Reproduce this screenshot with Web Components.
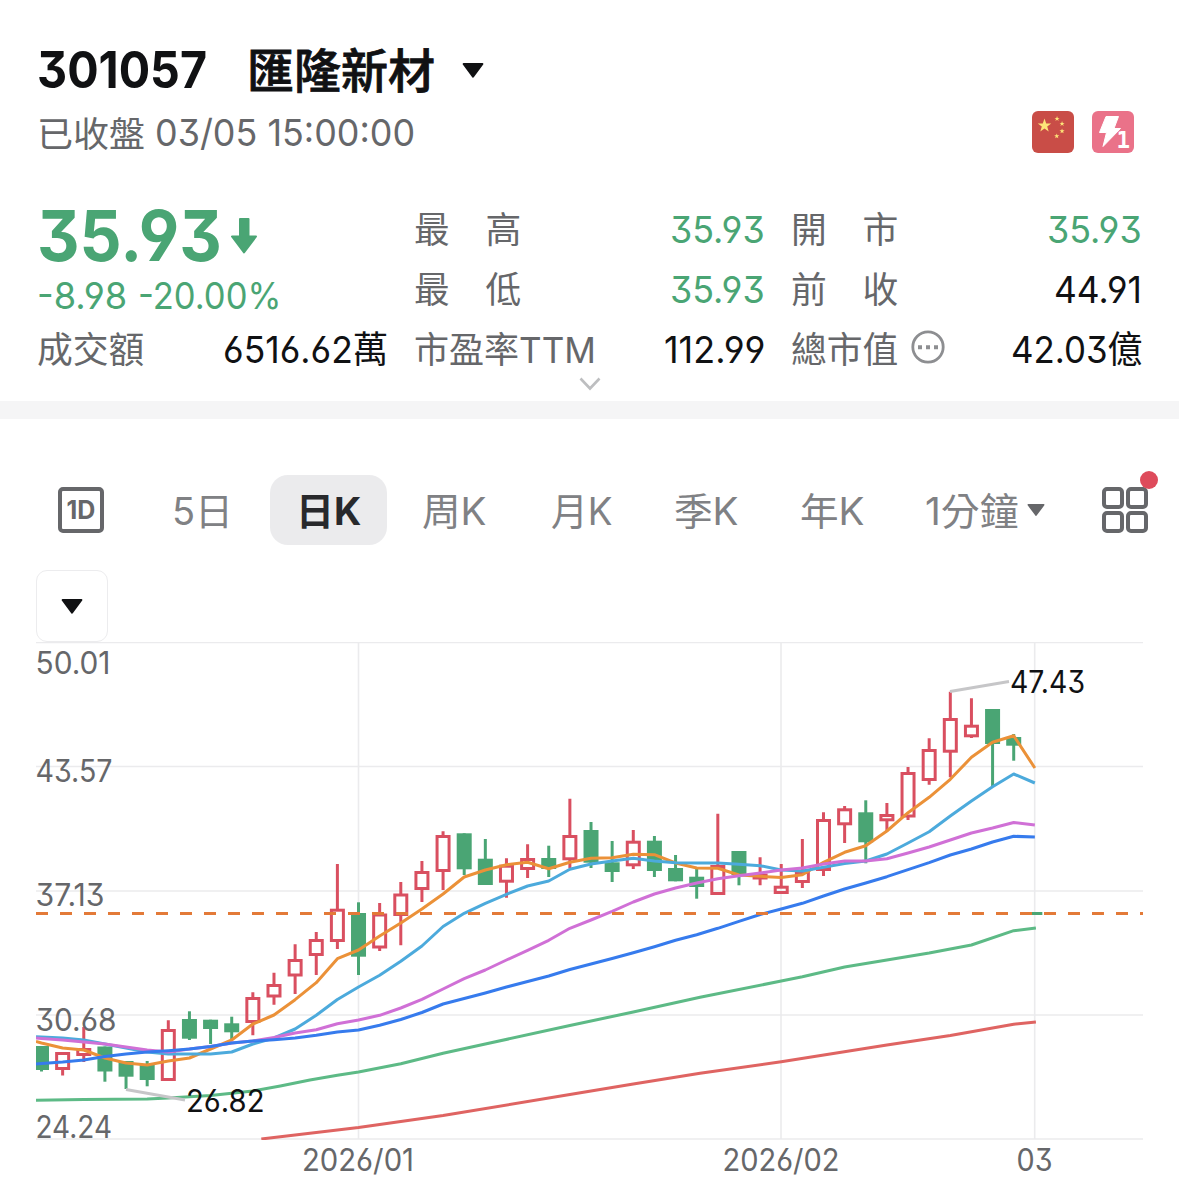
<!DOCTYPE html>
<html lang="zh-Hant">
<head>
<meta charset="utf-8">
<title>301057 匯隆新材</title>
<style>
    html, body {
        margin: 0;
        background: #fff;
    }

    body {
        width: 1179px;
        height: 1204px;
        overflow: hidden;
        font-family: Inter, "Noto Sans CJK TC", sans-serif;
        font-feature-settings: "cv03", "cv04", "cv09";
        color: #101113;
        --up: #d94f60;
        --down: #4aa574;
        --muted: #66676a;
    }
</style>
</head>
<body>
<stock-page></stock-page>

<script>
/**
 * Text squeezed or stretched horizontally to a given width
 */
class FitText extends HTMLElement {
    constructor() {
        super();
        this.attachShadow({ mode: 'open' });
        this.shadowRoot.innerHTML = `
            <style>
                :host {
                    display: block;
                    flex: none;
                    white-space: nowrap;
                }

                span {
                    display: inline-block;
                    transform-origin: 0 50%;
                }
            </style>
            <span><slot></slot></span>
        `;
    }

    connectedCallback() {
        const width = Number(this.getAttribute('width'));
        const span = this.shadowRoot.querySelector('span');
        this.style.width = width + 'px';
        span.style.transform = `scaleX(${width / span.offsetWidth})`;
    }
}

class CaretDown extends HTMLElement {
    constructor() {
        super();
        this.attachShadow({ mode: 'open' });
        this.shadowRoot.innerHTML = `
            <style>
                :host { display: block; flex: none; width: 22px; }
                svg { display: block; width: 100%; }
            </style>
            <svg viewBox="0 0 22 15"><path d="M1.6 1H20.4L11 13.6Z" fill="currentColor" stroke="currentColor" stroke-width="2" stroke-linejoin="round"/></svg>
        `;
    }
}

class StockHeader extends HTMLElement {
    constructor() {
        super();
        this.attachShadow({ mode: 'open' });
        this.shadowRoot.innerHTML = `
            <style>
                :host {
                    display: block;
                    padding: 40px 45px 0 37px;
                }

                .title, .status, .time, .badges {
                    display: flex;
                    align-items: center;
                }

                .title {
                    height: 60px;
                    line-height: 60px;
                    font-size: 51px;
                    font-weight: 650;
                }

                .name {
                    font-size: 47px;
                    font-weight: 500;
                    -webkit-text-stroke: .8px currentColor;
                    margin: 2px 27px 0 40px;
                }

                .status {
                    height: 66px;
                    line-height: 66px;
                    justify-content: space-between;
                    font-size: 37px;
                    color: var(--muted);
                }

                .time { gap: 10px; }
                .cjk { font-size: 35.7px; padding-top: 1px; }
                .badges { gap: 18px; margin-top: -2px; }
                svg { display: block; }
            </style>
            <div class="title">
                <fit-text width="170">301057</fit-text>
                <fit-text class="name" width="188">匯隆新材</fit-text>
                <caret-down></caret-down>
            </div>
            <div class="status">
                <div class="time">
                    <fit-text class="cjk" width="108">已收盤</fit-text>
                    <fit-text width="260">03/05 15:00:00</fit-text>
                </div>
                <div class="badges">
                    <svg width="42" height="42" viewBox="0 0 42 42">
                        <rect width="42" height="42" rx="6" fill="#c94d47"/>
                        <g fill="#fde478">
                            <path id="star" d="M12.5 7.6l1.7 4.8h5l-4 3.1 1.5 4.9-4.2-2.9-4.2 2.9 1.5-4.9-4-3.1h5z"/>
                            <use href="#star" transform="translate(20.3 2.2) scale(.38)"/>
                            <use href="#star" transform="translate(25.3 7.2) scale(.38)"/>
                            <use href="#star" transform="translate(25.3 14.5) scale(.38)"/>
                            <use href="#star" transform="translate(20 19.5) scale(.38)"/>
                        </g>
                    </svg>
                    <svg width="42" height="42" viewBox="0 0 42 42">
                        <rect width="42" height="42" rx="6" fill="#ea7289"/>
                        <path d="M14 5.5H26.5L22 17.5H28.5L11 35.5L14.5 21.5H7.5Z" fill="#fff" stroke="#fff" stroke-width="1" stroke-linejoin="round"/>
                        <text x="24.5" y="37" font-family="DejaVu Sans Mono, monospace" font-weight="700" font-size="22.5" fill="#fff">1</text>
                    </svg>
                </div>
            </div>
        `;
    }
}

/**
 * One label / value pair. Attributes: label, label-width, value, width, tone
 */
class QuoteItem extends HTMLElement {
    constructor() {
        super();
        this.attachShadow({ mode: 'open' });
    }

    connectedCallback() {
        this.shadowRoot.innerHTML = `
            <style>
                :host {
                    display: flex;
                    justify-content: space-between;
                    height: 60px;
                    line-height: 60px;
                    font-size: 37px;
                }

                .label {
                    display: flex;
                    align-items: center;
                    gap: 13px;
                    font-size: 35.8px;
                    color: var(--muted);
                }

                .value { color: ${this.getAttribute('tone') === 'down' ? 'var(--down)' : 'inherit'}; }
            </style>
            <div class="label"><fit-text width="${this.getAttribute('label-width')}">${this.getAttribute('label')}</fit-text><slot></slot></div>
            <fit-text class="value" width="${this.getAttribute('width')}">${this.getAttribute('value')}</fit-text>
        `;
    }
}

class QuotePanel extends HTMLElement {
    constructor() {
        super();
        this.attachShadow({ mode: 'open' });
        this.shadowRoot.innerHTML = `
            <style>
                :host {
                    display: block;
                    height: 201px;
                    margin-top: 34px;
                    border-bottom: 18px solid #f5f5f6;
                }

                .grid {
                    display: grid;
                    grid-template-columns: 351px 351px 351px;
                    column-gap: 26px;
                    height: 177px;
                    padding-left: 37px;
                }

                .last { color: var(--down); }

                .price {
                    display: flex;
                    align-items: center;
                    gap: 9px;
                    height: 72px;
                    line-height: 72px;
                    font-size: 70.5px;
                    font-weight: 700;
                }

                .change {
                    display: flex;
                    gap: 11px;
                    height: 48px;
                    line-height: 47px;
                    font-size: 37px;
                }

                svg { display: block; }
                .chevron { margin: 0 auto; }
                .more { margin-top: -6px; }
            </style>
            <div class="grid">
                <div>
                    <div class="last">
                        <div class="price">
                            <fit-text width="185">35.93</fit-text>
                            <svg width="26" height="36" viewBox="0 0 26 36"><path d="M9 1H17.5V18.5H25L13 34.5L1 18.5H9Z" fill="currentColor" stroke="currentColor" stroke-width="2" stroke-linejoin="round"/></svg>
                        </div>
                        <div class="change">
                            <fit-text width="90">-8.98</fit-text>
                            <fit-text width="143">-20.00%</fit-text>
                        </div>
                    </div>
                    <quote-item label="成交額" label-width="107" value="6516.62萬" width="165"></quote-item>
                </div>
                <div>
                    <quote-item label="最　高" label-width="107" value="35.93" width="95" tone="down"></quote-item>
                    <quote-item label="最　低" label-width="107" value="35.93" width="95" tone="down"></quote-item>
                    <quote-item label="市盈率TTM" label-width="182" value="112.99" width="101"></quote-item>
                </div>
                <div>
                    <quote-item label="開　市" label-width="107" value="35.93" width="95" tone="down"></quote-item>
                    <quote-item label="前　收" label-width="107" value="44.91" width="88"></quote-item>
                    <quote-item label="總市值" label-width="107" value="42.03億" width="131">
                        <svg class="more" width="34" height="34" viewBox="0 0 34 34">
                            <circle cx="17" cy="17" r="15.2" fill="none" stroke="#8d8e91" stroke-width="2.8"/>
                            <path d="M7 15.2h4v4h-4zM15 15.2h4v4h-4zM23 15.2h4v4h-4z" fill="#8d8e91"/>
                        </svg>
                    </quote-item>
                </div>
            </div>
            <svg class="chevron" width="22" height="14" viewBox="0 0 22 14"><path d="M1.5 1.5L11 11.5L20.5 1.5" fill="none" stroke="#bdbec0" stroke-width="2.6"/></svg>
        `;
    }
}

class PeriodTabs extends HTMLElement {
    constructor() {
        super();
        this.attachShadow({ mode: 'open' });
        this.shadowRoot.innerHTML = `
            <style>
                :host {
                    display: flex;
                    align-items: center;
                    height: 70px;
                    margin-top: 56px;
                    padding-left: 58px;
                    line-height: 72px;
                    font-size: 38px;
                    color: #808184;
                }

                .day {
                    box-sizing: border-box;
                    display: flex;
                    justify-content: center;
                    width: 46px;
                    height: 46px;
                    border: 4px solid #66676a;
                    border-radius: 5px;
                    line-height: 38px;
                    font-size: 25px;
                    font-weight: 650;
                    color: #66676a;
                }

                .tab { margin-top: 1px; }

                .active {
                    display: flex;
                    justify-content: center;
                    width: 117px;
                    height: 70px;
                    margin: 0 35px 0 37px;
                    border-radius: 18px;
                    background: #ebebed;
                    color: #28292c;
                    font-weight: 650;
                }

                caret-down {
                    width: 18px;
                    margin: 0 57px 0 9px;
                    color: #66676a;
                }

                .layout { position: relative; }
                .layout svg { display: block; }

                .dot {
                    position: absolute;
                    top: -16px;
                    right: -10px;
                    width: 18px;
                    height: 18px;
                    border-radius: 50%;
                    background: #de4b5b;
                }
            </style>
            <div class="day"><fit-text width="29">1D</fit-text></div>
            <fit-text class="tab" width="61" style="margin-left: 68px">5日</fit-text>
            <div class="active"><fit-text width="65">日K</fit-text></div>
            <fit-text class="tab" width="65">周K</fit-text>
            <fit-text class="tab" width="62" style="margin-left: 64px">月K</fit-text>
            <fit-text class="tab" width="65" style="margin-left: 61px">季K</fit-text>
            <fit-text class="tab" width="65" style="margin-left: 61px">年K</fit-text>
            <fit-text class="tab" width="93" style="margin-left: 60px">1分鐘</fit-text>
            <caret-down></caret-down>
            <div class="layout">
                <svg width="46" height="46" viewBox="0 0 46 46" fill="none" stroke="#66676a" stroke-width="4">
                    <rect x="2" y="2" width="18" height="18" rx="3"/>
                    <rect x="26" y="2" width="18" height="18" rx="3"/>
                    <rect x="2" y="26" width="18" height="18" rx="3"/>
                    <rect x="26" y="26" width="18" height="18" rx="3"/>
                </svg>
                <div class="dot"></div>
            </div>
        `;
    }
}

class IndicatorButton extends HTMLElement {
    constructor() {
        super();
        this.attachShadow({ mode: 'open' });
        this.shadowRoot.innerHTML = `
            <style>
                :host {
                    box-sizing: border-box;
                    display: flex;
                    align-items: center;
                    justify-content: center;
                    width: 72px;
                    height: 72px;
                    margin: 25px 0 0 36px;
                    border: 1.5px solid #ececee;
                    border-radius: 11px;
                }
            </style>
            <caret-down></caret-down>
        `;
    }
}

// [direction, high, body top, body bottom, low] in chart units
const CANDLES = [
    ['d', 1046, 1046, 1070, 1071.5], ['u', 1052, 1052, 1070, 1075.5], ['u', 1027, 1048, 1056, 1062],
    ['d', 1046.5, 1046.5, 1071.5, 1081.7], ['d', 1061, 1061, 1076.7, 1089], ['d', 1061, 1065, 1080, 1086.3],
    ['u', 1020.3, 1029, 1081, 1081], ['d', 1011.3, 1019, 1038.7, 1040], ['d', 1019.7, 1019.7, 1029, 1044],
    ['d', 1016.7, 1023.3, 1032.3, 1040], ['u', 992.3, 997, 1023, 1035.3], ['u', 972.7, 984, 997.5, 1004.7],
    ['u', 944.3, 959, 976.5, 994], ['u', 932, 939, 956, 975], ['u', 864, 908.7, 942, 949],
    ['d', 902.3, 913, 956.7, 975], ['u', 903, 913.5, 948.5, 951], ['u', 882, 893.5, 916, 945.3],
    ['u', 861, 871, 890, 902], ['u', 831.3, 835, 872, 890], ['d', 833.3, 833.3, 869.3, 875],
    ['d', 839, 858.7, 885, 885], ['u', 858.3, 864.7, 882.7, 897.7], ['u', 844.3, 858, 870, 878],
    ['d', 845.7, 858, 869, 877], ['u', 798.7, 835, 860.3, 868.3], ['d', 822, 830, 862.7, 868],
    ['d', 841, 862.3, 872, 882], ['u', 830, 840.7, 866.3, 869], ['d', 836, 840.7, 871, 877],
    ['d', 855, 868, 881.3, 881.3], ['d', 868.7, 876.7, 887, 898.7], ['u', 813.7, 865, 895, 895],
    ['d', 851, 851, 875, 885.3], ['u', 857.3, 873.5, 879.5, 885.3], ['u', 864, 885.7, 894, 894],
    ['u', 839, 871, 883, 888], ['u', 812.3, 819, 871, 876], ['u', 806, 808.3, 825.3, 843],
    ['d', 800.3, 812.3, 842.3, 863.3], ['u', 803, 814, 821.3, 831], ['u', 767, 772, 817.5, 820],
    ['u', 738.3, 749, 781, 784.7], ['u', 691.7, 718, 752.7, 777.3], ['u', 698.3, 724.7, 737.3, 738],
    ['d', 709, 709, 744, 786], ['d', 734, 737, 745.7, 760.7], ['d', 912, 912, 915, 915]
];

// moving averages, one value per candle unless x is given by "at"
const AVERAGES = [
    { color: '#df6462', at: [10.4, 15, 19, 25, 28, 31.16, 35, 40, 43, 46, 47.05],
        y: [1139, 1127.5, 1115.5, 1094.5, 1084, 1073.3, 1061.7, 1045, 1035.5, 1024.3, 1022] },
    { color: '#5dba86', at: [-.3, 2, 5, 6, 8, 10, 11.3, 12.7, 14, 15, 17, 19, 21, 25, 28, 31.16, 35, 36, 38, 40, 42, 44, 46, 47.05],
        y: [1100.3, 1099.5, 1099, 1098, 1095.5, 1091, 1086, 1080, 1075.3, 1072, 1063.7, 1053.3, 1044, 1025.5, 1012, 997.3, 981, 976.7, 967, 960, 953, 945, 930.7, 928] },
    { color: '#eb9138', y: [1043, 1048, 1050, 1058, 1063, 1065, 1061, 1058, 1049, 1040, 1024, 1015, 999.7, 982.7, 958.7, 950, 936, 923, 909, 894, 877, 870, 864.7, 862.3, 868.7, 862.3, 858.3, 857.7, 854.3, 854.7, 863, 868, 868.3, 875, 876.3, 877.5, 874.7, 862.3, 852.3, 845.7, 831, 812.7, 797.3, 779.3, 757.3, 742.3, 735.7, 768] },
    { color: '#4caadc', y: [1037, 1038, 1040, 1044, 1048, 1052, 1054, 1054, 1054, 1052, 1044, 1038, 1029, 1015.3, 999.5, 987, 975.3, 961.3, 946, 926.5, 913.3, 903.3, 894.3, 886, 881, 869.3, 864, 861, 858.3, 861, 862.7, 863, 863, 864.3, 865.7, 870, 871, 867.3, 863.5, 861, 854, 843, 831.7, 816, 801, 786.7, 774, 783] },
    { color: '#d070d6', y: [1038.5, 1040, 1042, 1044, 1047, 1050, 1052, 1049, 1046.5, 1043, 1041, 1037.5, 1033, 1029.7, 1023.7, 1020, 1015.3, 1008, 999.3, 989, 978.7, 970, 960, 950.3, 940.3, 928.3, 920, 911.3, 902, 894, 888, 883, 878.7, 875.7, 873, 870, 868, 864, 861, 861, 858.7, 853, 847, 840, 833, 828, 822.5, 825] },
    { color: '#367bed', y: [1063.5, 1062, 1060, 1056.5, 1054, 1052, 1050.7, 1049, 1046.5, 1043, 1041, 1039.7, 1038, 1035.3, 1032, 1030, 1025.3, 1019.5, 1012.5, 1004, 998.5, 993, 987, 981.5, 976, 969.5, 964, 958.5, 952.7, 946.7, 940.3, 934.7, 928.3, 921.3, 914.5, 909, 903.3, 896, 889, 883, 876.7, 869.7, 862.7, 855, 849, 842, 836.3, 837] }
];

// [text, x, baseline, drawn width, class]
const LABELS = [
    ['50.01', 35.5, 673.5, 75], ['43.57', 35.5, 781.5, 77], ['37.13', 35.5, 906, 69],
    ['30.68', 35.5, 1030.5, 81], ['24.24', 35.5, 1138, 76.5],
    ['2026/01', 302, 1171, 112], ['2026/02', 722.5, 1171, 117], ['03', 1016.5, 1171, 36],
    ['47.43', 1010, 693, 75, 'mark'], ['26.82', 186, 1112, 78.5, 'mark']
];

class CandleChart extends HTMLElement {
    constructor() {
        super();
        this.attachShadow({ mode: 'open' });
        this.render();
    }

    x(index) {
        return 41.5 + index * 21.135;
    }

    drawGrid() {
        const rows = [642.5, 766.5, 891, 1015, 1139].map(y => `M36 ${y}H1143`);
        const cols = [358.5, 781, 1034.7].map(x => `M${x} 642V1139`);
        return `<path d="${rows.join('')}${cols.join('')}" stroke="#ebebed" stroke-width="1.6"/>`;
    }

    drawCandle([dir, high, top, bottom, low], index) {
        const x = this.x(index);
        if (dir === 'd') {
            return `<path d="M${x} ${high}V${low}" stroke="var(--down)" stroke-width="3"/>
                <rect x="${x - 7.5}" y="${top}" width="15" height="${bottom - top}" fill="var(--down)"/>`;
        }
        return `<path d="M${x} ${high}V${top + 1}M${x} ${bottom - 1}V${Math.max(low, bottom - 1)}" stroke="var(--up)" stroke-width="3"/>
            <rect x="${x - 6}" y="${top + 1.5}" width="12" height="${bottom - top - 3}" fill="none" stroke="var(--up)" stroke-width="3"/>`;
    }

    drawAverage({ color, at, y }) {
        const points = y.map((value, i) => `${this.x(at ? at[i] : i)},${value}`);
        if (!at) {
            // run the line out to the left edge of the plot
            points.unshift(`36,${y[0] - (y[1] - y[0]) * 0.3}`);
        }
        return `<polyline points="${points.join(' ')}" fill="none" stroke="${color}" stroke-width="3" stroke-linejoin="round"/>`;
    }

    drawLabel([text, x, y, width, cls]) {
        return `<text class="${cls || ''}" x="${x}" y="${y}" textLength="${width}" lengthAdjust="spacingAndGlyphs">${text}</text>`;
    }

    render() {
        this.shadowRoot.innerHTML = `
            <style>
                :host { display: block; }
                svg { display: block; }
                text { font-size: 30.5px; fill: var(--muted); }
                .mark { fill: #101113; }
            </style>
            <svg width="1179" height="562" viewBox="0 642 1179 562">
                <clipPath id="plot"><rect x="36" y="642" width="1107" height="498"/></clipPath>
                ${this.drawGrid()}
                <g clip-path="url(#plot)">
                    ${CANDLES.map((c, i) => this.drawCandle(c, i)).join('')}
                    ${AVERAGES.map(a => this.drawAverage(a)).join('')}
                    <path d="M36 913.5H1143" stroke="#e37a38" stroke-width="3" stroke-dasharray="12"/>
                </g>
                <path d="M950 691.5L1009 681.5M126 1089.5L185 1100" stroke="#c6c6c8" stroke-width="2.8"/>
                ${LABELS.map(l => this.drawLabel(l)).join('')}
            </svg>
        `;
    }
}

class StockPage extends HTMLElement {
    constructor() {
        super();
        this.attachShadow({ mode: 'open' });
        this.shadowRoot.innerHTML = `
            <style>
                :host { display: block; }
            </style>
            <stock-header></stock-header>
            <quote-panel></quote-panel>
            <period-tabs></period-tabs>
            <indicator-button></indicator-button>
            <candle-chart></candle-chart>
        `;
    }
}

// Register the custom elements
customElements.define('fit-text', FitText);
customElements.define('caret-down', CaretDown);
customElements.define('stock-header', StockHeader);
customElements.define('quote-item', QuoteItem);
customElements.define('quote-panel', QuotePanel);
customElements.define('period-tabs', PeriodTabs);
customElements.define('indicator-button', IndicatorButton);
customElements.define('candle-chart', CandleChart);
customElements.define('stock-page', StockPage);
</script>
</body>
</html>
